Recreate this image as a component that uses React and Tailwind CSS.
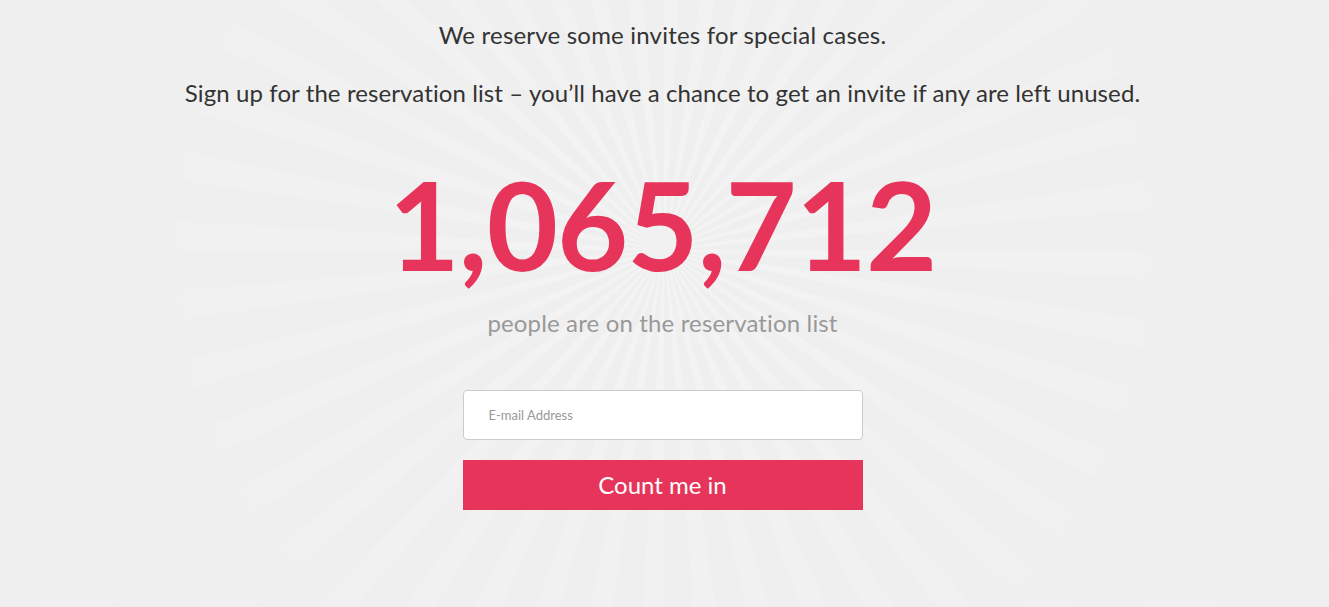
import React from 'react';

const CX = 664;
const CY = 250;
const RAYS = 44;

function Sunburst() {
  const wedges = [];
  const R = 1200;
  for (let i = 0; i < RAYS; i++) {
    const a0 = (i / RAYS) * Math.PI * 2;
    const a1 = a0 + (Math.PI * 2) / RAYS / 2.4;
    const x0 = CX + Math.cos(a0) * R;
    const y0 = CY + Math.sin(a0) * R;
    const x1 = CX + Math.cos(a1) * R;
    const y1 = CY + Math.sin(a1) * R;
    wedges.push(`M${CX} ${CY} L${x0.toFixed(1)} ${y0.toFixed(1)} L${x1.toFixed(1)} ${y1.toFixed(1)} Z`);
  }
  return (
    <svg className="absolute inset-0 w-full h-full" viewBox="0 0 1329 607" preserveAspectRatio="none">
      <defs>
        <radialGradient id="fade" cx={CX} cy={CY} r="750" gradientUnits="userSpaceOnUse">
          <stop offset="0" stopColor="#fff" stopOpacity="0.9" />
          <stop offset="0.4" stopColor="#fff" stopOpacity="0.4" />
          <stop offset="1" stopColor="#fff" stopOpacity="0.08" />
        </radialGradient>
      </defs>
      <path d={wedges.join(' ')} fill="url(#fade)" opacity="0.35" />
    </svg>
  );
}

export default function App() {
  return (
    <div className="relative w-full h-[607px] overflow-hidden bg-[#efefef] font-['Lato','Open_Sans',sans-serif] [font-variant-ligatures:none]">
      <Sunburst />
      <div className="relative flex flex-col items-center pt-[20px] pr-[4px]">
        <p className="text-[24px] leading-[30px] text-[#333] tracking-[0.2px]">We reserve some invites for special cases.</p>
        <p className="mt-[28px] text-[24px] leading-[30px] text-[#333] tracking-[0.1px]">
          Sign up for the reservation list – you’ll have a chance to get an invite if any are left unused.
        </p>
        <h1 className="mt-[54px] text-[123px] leading-[124px] font-bold text-[#e7345a] tracking-[-1px]">1,065,712</h1>
        <p className="mt-[22px] text-[24px] leading-[30px] text-[#999] tracking-[0.15px]">people are on the reservation list</p>
        <form className="mt-[52px] flex flex-col gap-[20px] w-[400px]" onSubmit={(e) => e.preventDefault()}>
          <input
            type="email"
            placeholder="E-mail Address"
            className="h-[50px] w-full rounded-[4px] border border-[#ccc] bg-white px-[25px] text-[13px] text-[#555] placeholder:text-[#999] outline-none"
          />
          <button type="submit" className="h-[50px] w-full bg-[#e7345a] text-white text-[24px] leading-[50px]">
            Count me in
          </button>
        </form>
      </div>
    </div>
  );
}
